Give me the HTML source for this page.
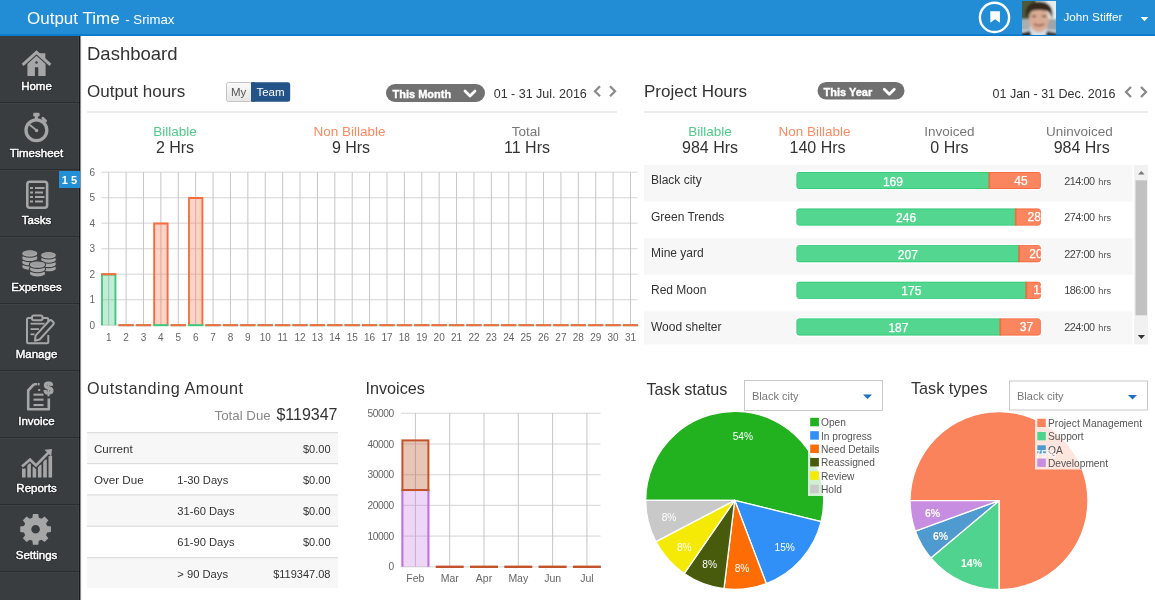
<!DOCTYPE html>
<html><head><meta charset="utf-8"><title>Output Time - Dashboard</title>
<style>
html,body{margin:0;padding:0;background:#fff;overflow:hidden;}
body{width:1155px;height:600px;position:relative;font-family:"Liberation Sans", sans-serif;}
svg{position:absolute;left:0;top:0;display:block;will-change:transform;}
svg text{font-family:"Liberation Sans", sans-serif;}
</style></head><body>
<svg width="1155" height="600" viewBox="0 0 1155 600">
<defs><linearGradient id="gMy" x1="0" y1="0" x2="0" y2="1"><stop offset="0" stop-color="#fafafa"/><stop offset="1" stop-color="#e6e6e6"/></linearGradient></defs>
<rect x="0" y="0" width="1155" height="36" fill="#228dd4" />
<rect x="0" y="34.2" width="1155" height="1.8" fill="#0b7acb" />
<text x="27" y="24" font-size="17" fill="#fff" text-anchor="start" font-weight="400" >Output Time</text>
<text x="125.3" y="23.5" font-size="13.2" fill="#fff" text-anchor="start" font-weight="400" >- Srimax</text>
<circle cx="994.5" cy="17.4" r="14.6" fill="none" stroke="#fff" stroke-width="2.4"/>
<path d="M990.3 11.3 H999.9 V22.7 L995.1 19.2 L990.3 22.7 Z" fill="#fff" stroke="none" stroke-width="1" />
<clipPath id="avc"><rect x="1022" y="1" width="34" height="34"/></clipPath>
<filter id="avb" x="-10%" y="-10%" width="120%" height="120%"><feGaussianBlur stdDeviation="0.9"/></filter>
<g clip-path="url(#avc)"><g filter="url(#avb)">
<rect x="1020" y="-1" width="38" height="38" fill="#cfd3d2"/>
<rect x="1020" y="-1" width="16" height="20" fill="#4d5a3e"/>
<rect x="1046" y="-1" width="12" height="22" fill="#e9eceb"/>
<rect x="1020" y="19" width="10" height="14" fill="#a9aeb0"/>
<rect x="1047" y="19" width="11" height="14" fill="#9ea5aa"/>
<path d="M1020 37 V31 Q1028 29 1034 30 L1044 30 Q1050 29 1058 31 V37 Z" fill="#d8dde4"/>
<path d="M1020 37 V33 L1030 31 L1032 37 Z" fill="#2a2a2a"/>
<path d="M1045 37 L1047 31 L1058 33 V37 Z" fill="#3a3a3a"/>
<ellipse cx="1039" cy="19.5" rx="10" ry="12.5" fill="#d9aa93"/>
<path d="M1026 19 Q1023 2 1039 1.5 Q1055 2 1052 19 Q1050 12 1047 11 Q1039 9 1031 11 Q1028 12 1026 19 Z" fill="#35291f"/>
<rect x="1032" y="15.5" width="4" height="1.6" fill="#5a3c2c"/>
<rect x="1042" y="15.5" width="4" height="1.6" fill="#5a3c2c"/>
<path d="M1034 24 Q1039 27 1044 24" stroke="#8f5a4c" stroke-width="1.6" fill="none"/>
</g></g>
<text x="1063.5" y="21.3" font-size="11.7" fill="#fff" text-anchor="start" font-weight="400" >John Stiffer</text>
<path d="M1140.7 16.9 H1148.3 L1144.5 21.3 Z" fill="#fff" stroke="none" stroke-width="1" />
<rect x="0" y="36" width="80" height="564" fill="#3a3d40" />
<rect x="78" y="36" width="1" height="564" fill="#44474a" />
<rect x="79" y="36" width="1" height="564" fill="#15171a" />
<rect x="80" y="36" width="1" height="564" fill="#8e8f90" />
<rect x="81" y="36" width="1" height="564" fill="#f1f1f1" />
<rect x="0" y="102" width="79" height="1.3" fill="#2a2c2e" />
<rect x="0" y="103" width="79" height="1" fill="#404346" />
<text x="36.5" y="89.5" font-size="11.5" fill="#111" text-anchor="middle" font-weight="400" stroke="#151618" stroke-width="2.2" opacity="0.55">Home</text>
<text x="36.5" y="89.5" font-size="11.5" fill="#fff" text-anchor="middle" font-weight="400" stroke="#fff" stroke-width="0.45">Home</text>
<rect x="0" y="169" width="79" height="1.3" fill="#2a2c2e" />
<rect x="0" y="170" width="79" height="1" fill="#404346" />
<text x="36.5" y="156.5" font-size="11.5" fill="#111" text-anchor="middle" font-weight="400" stroke="#151618" stroke-width="2.2" opacity="0.55">Timesheet</text>
<text x="36.5" y="156.5" font-size="11.5" fill="#fff" text-anchor="middle" font-weight="400" stroke="#fff" stroke-width="0.45">Timesheet</text>
<rect x="0" y="236" width="79" height="1.3" fill="#2a2c2e" />
<rect x="0" y="237" width="79" height="1" fill="#404346" />
<text x="36.5" y="223.5" font-size="11.5" fill="#111" text-anchor="middle" font-weight="400" stroke="#151618" stroke-width="2.2" opacity="0.55">Tasks</text>
<text x="36.5" y="223.5" font-size="11.5" fill="#fff" text-anchor="middle" font-weight="400" stroke="#fff" stroke-width="0.45">Tasks</text>
<rect x="0" y="303" width="79" height="1.3" fill="#2a2c2e" />
<rect x="0" y="304" width="79" height="1" fill="#404346" />
<text x="36.5" y="290.5" font-size="11.5" fill="#111" text-anchor="middle" font-weight="400" stroke="#151618" stroke-width="2.2" opacity="0.55">Expenses</text>
<text x="36.5" y="290.5" font-size="11.5" fill="#fff" text-anchor="middle" font-weight="400" stroke="#fff" stroke-width="0.45">Expenses</text>
<rect x="0" y="370" width="79" height="1.3" fill="#2a2c2e" />
<rect x="0" y="371" width="79" height="1" fill="#404346" />
<text x="36.5" y="357.5" font-size="11.5" fill="#111" text-anchor="middle" font-weight="400" stroke="#151618" stroke-width="2.2" opacity="0.55">Manage</text>
<text x="36.5" y="357.5" font-size="11.5" fill="#fff" text-anchor="middle" font-weight="400" stroke="#fff" stroke-width="0.45">Manage</text>
<rect x="0" y="437" width="79" height="1.3" fill="#2a2c2e" />
<rect x="0" y="438" width="79" height="1" fill="#404346" />
<text x="36.5" y="424.5" font-size="11.5" fill="#111" text-anchor="middle" font-weight="400" stroke="#151618" stroke-width="2.2" opacity="0.55">Invoice</text>
<text x="36.5" y="424.5" font-size="11.5" fill="#fff" text-anchor="middle" font-weight="400" stroke="#fff" stroke-width="0.45">Invoice</text>
<rect x="0" y="504" width="79" height="1.3" fill="#2a2c2e" />
<rect x="0" y="505" width="79" height="1" fill="#404346" />
<text x="36.5" y="491.5" font-size="11.5" fill="#111" text-anchor="middle" font-weight="400" stroke="#151618" stroke-width="2.2" opacity="0.55">Reports</text>
<text x="36.5" y="491.5" font-size="11.5" fill="#fff" text-anchor="middle" font-weight="400" stroke="#fff" stroke-width="0.45">Reports</text>
<rect x="0" y="571" width="79" height="1.3" fill="#2a2c2e" />
<rect x="0" y="572" width="79" height="1" fill="#404346" />
<text x="36.5" y="558.5" font-size="11.5" fill="#111" text-anchor="middle" font-weight="400" stroke="#151618" stroke-width="2.2" opacity="0.55">Settings</text>
<text x="36.5" y="558.5" font-size="11.5" fill="#fff" text-anchor="middle" font-weight="400" stroke="#fff" stroke-width="0.45">Settings</text>
<path d="M27.4 63.5 L36.5 55 L45.6 63.5 V76.1 H38.3 V67.3 H34.9 V76.1 H27.4 Z" fill="#a6a6a6" stroke="none" stroke-width="1" />
<path d="M23.1 64.3 L36.5 52.3 L49.8 64.3" fill="none" stroke="#3a3d40" stroke-width="5" />
<path d="M38.8 53.2 H45.3 V60.3 L38.8 54.5 Z" fill="#a6a6a6" stroke="none" stroke-width="1" />
<path d="M22.6 64.8 L36.5 52.3 L50.4 64.8" fill="none" stroke="#a6a6a6" stroke-width="2.9" />
<circle cx="36.5" cy="62.5" r="1.2" fill="#3a3d40"/>
<circle cx="36.4" cy="130.2" r="10.4" fill="none" stroke="#a6a6a6" stroke-width="3.3"/>
<rect x="33.2" y="112.8" width="6.4" height="3.6" fill="#a6a6a6" rx="1.2"/>
<rect x="34.9" y="115" width="3" height="4" fill="#a6a6a6" />
<path d="M42.8 118.3 L45.6 121.1" fill="none" stroke="#a6a6a6" stroke-width="2.8" stroke-linecap="round"/>
<path d="M30.2 125.2 L36.6 130.4" fill="none" stroke="#a6a6a6" stroke-width="1.8" stroke-linecap="round"/>
<circle cx="36.6" cy="130.5" r="1.7" fill="#a6a6a6"/>
<rect x="27.3" y="181.8" width="19.8" height="26" fill="none" stroke="#a6a6a6" stroke-width="2.6" rx="2.5"/>
<rect x="30" y="187" width="3" height="2" fill="#a6a6a6" />
<rect x="35" y="187" width="9.5" height="2" fill="#a6a6a6" />
<rect x="30" y="191.5" width="3" height="2" fill="#a6a6a6" />
<rect x="35" y="191.5" width="8" height="2" fill="#a6a6a6" />
<rect x="30" y="196" width="3" height="2" fill="#a6a6a6" />
<rect x="35" y="196" width="9.5" height="2" fill="#a6a6a6" />
<rect x="30" y="200.5" width="3" height="2" fill="#a6a6a6" />
<rect x="35" y="200.5" width="8" height="2" fill="#a6a6a6" />
<path d="M21.8 265.9 A8 3.2 0 0 1 37.8 265.9 V267.0 A8 3.2 0 0 1 21.8 267.0 Z" fill="#a6a6a6" stroke="#3a3d40" stroke-width="1.1"/>
<path d="M21.8 261.6 A8 3.2 0 0 1 37.8 261.6 V262.70000000000005 A8 3.2 0 0 1 21.8 262.70000000000005 Z" fill="#a6a6a6" stroke="#3a3d40" stroke-width="1.1"/>
<path d="M21.8 257.3 A8 3.2 0 0 1 37.8 257.3 V258.40000000000003 A8 3.2 0 0 1 21.8 258.40000000000003 Z" fill="#a6a6a6" stroke="#3a3d40" stroke-width="1.1"/>
<path d="M21.8 253.0 A8 3.2 0 0 1 37.8 253.0 V254.1 A8 3.2 0 0 1 21.8 254.1 Z" fill="#a6a6a6" stroke="#3a3d40" stroke-width="1.1"/>
<ellipse cx="29.8" cy="253" rx="6.7" ry="2" fill="#9c9c9c"/>
<path d="M40.7 267.59999999999997 A7.8 3.2 0 0 1 56.3 267.59999999999997 V268.7 A7.8 3.2 0 0 1 40.7 268.7 Z" fill="#a6a6a6" stroke="#3a3d40" stroke-width="1.1"/>
<path d="M40.7 263.3 A7.8 3.2 0 0 1 56.3 263.3 V264.40000000000003 A7.8 3.2 0 0 1 40.7 264.40000000000003 Z" fill="#a6a6a6" stroke="#3a3d40" stroke-width="1.1"/>
<path d="M40.7 259.0 A7.8 3.2 0 0 1 56.3 259.0 V260.1 A7.8 3.2 0 0 1 40.7 260.1 Z" fill="#a6a6a6" stroke="#3a3d40" stroke-width="1.1"/>
<path d="M40.7 254.7 A7.8 3.2 0 0 1 56.3 254.7 V255.79999999999998 A7.8 3.2 0 0 1 40.7 255.79999999999998 Z" fill="#a6a6a6" stroke="#3a3d40" stroke-width="1.1"/>
<ellipse cx="48.5" cy="254.7" rx="6.5" ry="2" fill="#9c9c9c"/>
<path d="M29.5 272.70000000000005 A8 3.2 0 0 1 45.5 272.70000000000005 V273.80000000000007 A8 3.2 0 0 1 29.5 273.80000000000007 Z" fill="#a6a6a6" stroke="#3a3d40" stroke-width="1.1"/>
<path d="M29.5 268.40000000000003 A8 3.2 0 0 1 45.5 268.40000000000003 V269.50000000000006 A8 3.2 0 0 1 29.5 269.50000000000006 Z" fill="#a6a6a6" stroke="#3a3d40" stroke-width="1.1"/>
<path d="M29.5 264.1 A8 3.2 0 0 1 45.5 264.1 V265.20000000000005 A8 3.2 0 0 1 29.5 265.20000000000005 Z" fill="#a6a6a6" stroke="#3a3d40" stroke-width="1.1"/>
<ellipse cx="37.5" cy="264.1" rx="6.7" ry="2" fill="#9c9c9c"/>
<path d="M41 318 H46.8 Q48.3 318 48.3 319.5 V325.5" fill="none" stroke="#a6a6a6" stroke-width="2" />
<path d="M31.5 318 H28.5 Q27 318 27 319.5 V341.8 Q27 343.3 28.5 343.3 H46.8 Q48.3 343.3 48.3 341.8 V335" fill="none" stroke="#a6a6a6" stroke-width="2" />
<rect x="32" y="315.5" width="10.5" height="4.8" fill="#3a3d40" stroke="#a6a6a6" stroke-width="2" rx="1.8"/>
<rect x="30.5" y="322.8" width="14" height="1.8" fill="#a6a6a6" />
<rect x="30.5" y="328.2" width="8.5" height="1.8" fill="#a6a6a6" />
<rect x="30.5" y="333.4" width="4" height="1.8" fill="#a6a6a6" />
<path d="M35 340.8 L35.6 335.6 L49.2 320.8 Q50.6 319.5 52 320.8 L53.2 322 Q54.4 323.4 53 324.8 L39.6 339.5 Z" fill="#3a3d40" stroke="#a6a6a6" stroke-width="2" stroke-linejoin="round"/>
<path d="M34 384.2 L28.2 390.5 V409.3 H48.8 V398.5" fill="none" stroke="#a6a6a6" stroke-width="2.6" stroke-linejoin="round"/>
<path d="M34 384.2 H37.2" fill="none" stroke="#a6a6a6" stroke-width="2.4" />
<rect x="37.8" y="383" width="1.8" height="2.4" fill="#a6a6a6" />
<rect x="38.2" y="389" width="2" height="2" fill="#a6a6a6" />
<rect x="33.5" y="393.6" width="10" height="2.1" fill="#a6a6a6" />
<rect x="33.5" y="398.6" width="10" height="2.1" fill="#a6a6a6" />
<rect x="33.5" y="404" width="10" height="2.1" fill="#a6a6a6" />
<text x="48.6" y="393.6" font-size="17" fill="#a6a6a6" text-anchor="middle" font-weight="700" stroke="#a6a6a6" stroke-width="1.1">$</text>
<rect x="22" y="468.5" width="3.6" height="9.0" fill="#a6a6a6" />
<rect x="27.3" y="463" width="3.6" height="14.5" fill="#a6a6a6" />
<rect x="32.6" y="466.5" width="3.6" height="11.0" fill="#a6a6a6" />
<rect x="37.9" y="464.5" width="3.6" height="13.0" fill="#a6a6a6" />
<rect x="43.2" y="459.5" width="3.6" height="18.0" fill="#a6a6a6" />
<rect x="48.5" y="456" width="3.6" height="21.5" fill="#a6a6a6" />
<path d="M22 466.5 L30 459.5 L36 465.5 L48.5 452.5" fill="none" stroke="#3a3d40" stroke-width="5.2" stroke-linejoin="miter"/>
<path d="M22 466.5 L30 459.5 L36 465.5 L48.5 452.5" fill="none" stroke="#a6a6a6" stroke-width="2.6" stroke-linejoin="miter"/>
<path d="M44.5 449.8 L52 449 L51.2 456.5 Z" fill="#a6a6a6" stroke="none" stroke-width="1" />
<path d="M32.40 517.73 L32.92 513.93 L38.28 513.93 L38.80 517.73 L41.51 518.86 L44.57 516.54 L48.36 520.33 L46.04 523.39 L47.17 526.10 L50.97 526.62 L50.97 531.98 L47.17 532.50 L46.04 535.21 L48.36 538.27 L44.57 542.06 L41.51 539.74 L38.80 540.87 L38.28 544.67 L32.92 544.67 L32.40 540.87 L29.69 539.74 L26.63 542.06 L22.84 538.27 L25.16 535.21 L24.03 532.50 L20.23 531.98 L20.23 526.62 L24.03 526.10 L25.16 523.39 L22.84 520.33 L26.63 516.54 L29.69 518.86 Z M39.9 529.3 A4.3 4.3 0 1 0 31.3 529.3 A4.3 4.3 0 1 0 39.9 529.3 Z" fill="#a6a6a6" stroke="none" stroke-width="1" fill-rule="evenodd"/>
<rect x="59" y="171" width="21" height="17" fill="#238fd6" />
<text x="69.5" y="184" font-size="11" fill="#fff" text-anchor="middle" font-weight="700" >1 5</text>
<text x="87" y="60" font-size="18.5" fill="#333" text-anchor="start" font-weight="400" >Dashboard</text>
<text x="87" y="96.7" font-size="17" fill="#333" text-anchor="start" font-weight="400" >Output hours</text>
<rect x="226.5" y="82.5" width="25" height="19" fill="url(#gMy)" stroke="#c4c4c4" stroke-width="1" rx="2"/>
<rect x="251" y="82.2" width="39.2" height="19.5" fill="#235387" rx="2.5"/>
<rect x="251" y="82.2" width="4" height="19.5" fill="#235387" />
<text x="238.7" y="96.3" font-size="11.5" fill="#555" text-anchor="middle" font-weight="400" >My</text>
<text x="270.5" y="96.3" font-size="11.5" fill="#fff" text-anchor="middle" font-weight="400" >Team</text>
<rect x="386" y="84" width="99" height="18" fill="#717171" rx="9"/>
<text x="392.5" y="97.5" font-size="11" fill="#fff" text-anchor="start" font-weight="700" stroke="#fff" stroke-width="0.35">This Month</text>
<path d="M465 91 L470 96 L475 91" fill="none" stroke="#fff" stroke-width="2.8" stroke-linecap="round" stroke-linejoin="round"/>
<text x="493.7" y="97.5" font-size="12.5" fill="#333" text-anchor="start" font-weight="400" >01 - 31 Jul. 2016</text>
<path d="M600 86.2 L595 91.2 L600 96.2" fill="none" stroke="#8a8a8a" stroke-width="2.3" />
<path d="M610 86.2 L615 91.2 L610 96.2" fill="none" stroke="#8a8a8a" stroke-width="2.3" />
<rect x="87" y="111.5" width="530" height="1" fill="#dcdcdc" />
<text x="175" y="136" font-size="13.5" fill="#4fca8a" text-anchor="middle" font-weight="400" >Billable</text>
<text x="175" y="153" font-size="16" fill="#333" text-anchor="middle" font-weight="400" >2 Hrs</text>
<text x="349.5" y="136" font-size="13.5" fill="#f98a62" text-anchor="middle" font-weight="400" >Non Billable</text>
<text x="351" y="153" font-size="16" fill="#333" text-anchor="middle" font-weight="400" >9 Hrs</text>
<text x="526" y="136" font-size="13.5" fill="#777" text-anchor="middle" font-weight="400" >Total</text>
<text x="527" y="153" font-size="16" fill="#333" text-anchor="middle" font-weight="400" >11 Hrs</text>
<rect x="101.3" y="324.59999999999997" width="536.2" height="1.2" fill="#dcdcdc" />
<text x="95" y="328.8" font-size="10" fill="#666" text-anchor="end" font-weight="400" >0</text>
<rect x="101.3" y="299.09999999999997" width="536.2" height="1.2" fill="#dcdcdc" />
<text x="95" y="303.3" font-size="10" fill="#666" text-anchor="end" font-weight="400" >1</text>
<rect x="101.3" y="273.59999999999997" width="536.2" height="1.2" fill="#dcdcdc" />
<text x="95" y="277.8" font-size="10" fill="#666" text-anchor="end" font-weight="400" >2</text>
<rect x="101.3" y="248.1" width="536.2" height="1.2" fill="#dcdcdc" />
<text x="95" y="252.29999999999998" font-size="10" fill="#666" text-anchor="end" font-weight="400" >3</text>
<rect x="101.3" y="222.6" width="536.2" height="1.2" fill="#dcdcdc" />
<text x="95" y="226.79999999999998" font-size="10" fill="#666" text-anchor="end" font-weight="400" >4</text>
<rect x="101.3" y="197.1" width="536.2" height="1.2" fill="#dcdcdc" />
<text x="95" y="201.29999999999998" font-size="10" fill="#666" text-anchor="end" font-weight="400" >5</text>
<rect x="101.3" y="171.6" width="536.2" height="1.2" fill="#dcdcdc" />
<text x="95" y="175.79999999999998" font-size="10" fill="#666" text-anchor="end" font-weight="400" >6</text>
<rect x="108.2" y="172.2" width="1" height="153.0" fill="#c6c6c6" />
<text x="108.7" y="340.5" font-size="10" fill="#666" text-anchor="middle" font-weight="400" >1</text>
<rect x="125.593" y="172.2" width="1" height="153.0" fill="#c6c6c6" />
<text x="126.093" y="340.5" font-size="10" fill="#666" text-anchor="middle" font-weight="400" >2</text>
<rect x="142.986" y="172.2" width="1" height="153.0" fill="#c6c6c6" />
<text x="143.486" y="340.5" font-size="10" fill="#666" text-anchor="middle" font-weight="400" >3</text>
<rect x="160.37900000000002" y="172.2" width="1" height="153.0" fill="#c6c6c6" />
<text x="160.87900000000002" y="340.5" font-size="10" fill="#666" text-anchor="middle" font-weight="400" >4</text>
<rect x="177.772" y="172.2" width="1" height="153.0" fill="#c6c6c6" />
<text x="178.272" y="340.5" font-size="10" fill="#666" text-anchor="middle" font-weight="400" >5</text>
<rect x="195.16500000000002" y="172.2" width="1" height="153.0" fill="#c6c6c6" />
<text x="195.66500000000002" y="340.5" font-size="10" fill="#666" text-anchor="middle" font-weight="400" >6</text>
<rect x="212.558" y="172.2" width="1" height="153.0" fill="#c6c6c6" />
<text x="213.058" y="340.5" font-size="10" fill="#666" text-anchor="middle" font-weight="400" >7</text>
<rect x="229.95100000000002" y="172.2" width="1" height="153.0" fill="#c6c6c6" />
<text x="230.45100000000002" y="340.5" font-size="10" fill="#666" text-anchor="middle" font-weight="400" >8</text>
<rect x="247.344" y="172.2" width="1" height="153.0" fill="#c6c6c6" />
<text x="247.844" y="340.5" font-size="10" fill="#666" text-anchor="middle" font-weight="400" >9</text>
<rect x="264.737" y="172.2" width="1" height="153.0" fill="#c6c6c6" />
<text x="265.237" y="340.5" font-size="10" fill="#666" text-anchor="middle" font-weight="400" >10</text>
<rect x="282.13" y="172.2" width="1" height="153.0" fill="#c6c6c6" />
<text x="282.63" y="340.5" font-size="10" fill="#666" text-anchor="middle" font-weight="400" >11</text>
<rect x="299.523" y="172.2" width="1" height="153.0" fill="#c6c6c6" />
<text x="300.023" y="340.5" font-size="10" fill="#666" text-anchor="middle" font-weight="400" >12</text>
<rect x="316.916" y="172.2" width="1" height="153.0" fill="#c6c6c6" />
<text x="317.416" y="340.5" font-size="10" fill="#666" text-anchor="middle" font-weight="400" >13</text>
<rect x="334.309" y="172.2" width="1" height="153.0" fill="#c6c6c6" />
<text x="334.809" y="340.5" font-size="10" fill="#666" text-anchor="middle" font-weight="400" >14</text>
<rect x="351.702" y="172.2" width="1" height="153.0" fill="#c6c6c6" />
<text x="352.202" y="340.5" font-size="10" fill="#666" text-anchor="middle" font-weight="400" >15</text>
<rect x="369.09499999999997" y="172.2" width="1" height="153.0" fill="#c6c6c6" />
<text x="369.59499999999997" y="340.5" font-size="10" fill="#666" text-anchor="middle" font-weight="400" >16</text>
<rect x="386.488" y="172.2" width="1" height="153.0" fill="#c6c6c6" />
<text x="386.988" y="340.5" font-size="10" fill="#666" text-anchor="middle" font-weight="400" >17</text>
<rect x="403.88100000000003" y="172.2" width="1" height="153.0" fill="#c6c6c6" />
<text x="404.38100000000003" y="340.5" font-size="10" fill="#666" text-anchor="middle" font-weight="400" >18</text>
<rect x="421.274" y="172.2" width="1" height="153.0" fill="#c6c6c6" />
<text x="421.774" y="340.5" font-size="10" fill="#666" text-anchor="middle" font-weight="400" >19</text>
<rect x="438.667" y="172.2" width="1" height="153.0" fill="#c6c6c6" />
<text x="439.167" y="340.5" font-size="10" fill="#666" text-anchor="middle" font-weight="400" >20</text>
<rect x="456.06" y="172.2" width="1" height="153.0" fill="#c6c6c6" />
<text x="456.56" y="340.5" font-size="10" fill="#666" text-anchor="middle" font-weight="400" >21</text>
<rect x="473.45300000000003" y="172.2" width="1" height="153.0" fill="#c6c6c6" />
<text x="473.95300000000003" y="340.5" font-size="10" fill="#666" text-anchor="middle" font-weight="400" >22</text>
<rect x="490.846" y="172.2" width="1" height="153.0" fill="#c6c6c6" />
<text x="491.346" y="340.5" font-size="10" fill="#666" text-anchor="middle" font-weight="400" >23</text>
<rect x="508.239" y="172.2" width="1" height="153.0" fill="#c6c6c6" />
<text x="508.739" y="340.5" font-size="10" fill="#666" text-anchor="middle" font-weight="400" >24</text>
<rect x="525.6320000000001" y="172.2" width="1" height="153.0" fill="#c6c6c6" />
<text x="526.1320000000001" y="340.5" font-size="10" fill="#666" text-anchor="middle" font-weight="400" >25</text>
<rect x="543.0250000000001" y="172.2" width="1" height="153.0" fill="#c6c6c6" />
<text x="543.5250000000001" y="340.5" font-size="10" fill="#666" text-anchor="middle" font-weight="400" >26</text>
<rect x="560.418" y="172.2" width="1" height="153.0" fill="#c6c6c6" />
<text x="560.918" y="340.5" font-size="10" fill="#666" text-anchor="middle" font-weight="400" >27</text>
<rect x="577.811" y="172.2" width="1" height="153.0" fill="#c6c6c6" />
<text x="578.311" y="340.5" font-size="10" fill="#666" text-anchor="middle" font-weight="400" >28</text>
<rect x="595.2040000000001" y="172.2" width="1" height="153.0" fill="#c6c6c6" />
<text x="595.7040000000001" y="340.5" font-size="10" fill="#666" text-anchor="middle" font-weight="400" >29</text>
<rect x="612.5970000000001" y="172.2" width="1" height="153.0" fill="#c6c6c6" />
<text x="613.0970000000001" y="340.5" font-size="10" fill="#666" text-anchor="middle" font-weight="400" >30</text>
<rect x="629.99" y="172.2" width="1" height="153.0" fill="#c6c6c6" />
<text x="630.49" y="340.5" font-size="10" fill="#666" text-anchor="middle" font-weight="400" >31</text>
<rect x="101.10000000000001" y="274.2" width="15.2" height="51.0" fill="rgba(76,202,138,0.35)" />
<path d="M102.00 325.2 V274.5 H115.40 V325.2" fill="none" stroke="#3ec77a" stroke-width="1.8" />
<rect x="153.27900000000002" y="223.2" width="15.2" height="102.0" fill="rgba(249,120,80,0.33)" />
<path d="M154.18 325.2 V223.5 H167.58 V325.2" fill="none" stroke="#f76c3f" stroke-width="1.8" />
<rect x="188.06500000000003" y="197.7" width="15.2" height="127.5" fill="rgba(249,120,80,0.33)" />
<path d="M188.97 325.2 V198.0 H202.37 V325.2" fill="none" stroke="#f76c3f" stroke-width="1.8" />
<rect x="101.10000000000001" y="273.2" width="15.2" height="2" fill="#f76c3f" />
<rect x="118.49300000000001" y="324.2" width="15.2" height="2" fill="#3ec77a" />
<rect x="118.49300000000001" y="324.2" width="15.2" height="2" fill="#f76c3f" />
<rect x="135.886" y="324.2" width="15.2" height="2" fill="#3ec77a" />
<rect x="135.886" y="324.2" width="15.2" height="2" fill="#f76c3f" />
<rect x="153.27900000000002" y="324.2" width="15.2" height="2" fill="#3ec77a" />
<rect x="170.672" y="324.2" width="15.2" height="2" fill="#3ec77a" />
<rect x="170.672" y="324.2" width="15.2" height="2" fill="#f76c3f" />
<rect x="188.06500000000003" y="324.2" width="15.2" height="2" fill="#3ec77a" />
<rect x="205.458" y="324.2" width="15.2" height="2" fill="#3ec77a" />
<rect x="205.458" y="324.2" width="15.2" height="2" fill="#f76c3f" />
<rect x="222.85100000000003" y="324.2" width="15.2" height="2" fill="#3ec77a" />
<rect x="222.85100000000003" y="324.2" width="15.2" height="2" fill="#f76c3f" />
<rect x="240.244" y="324.2" width="15.2" height="2" fill="#3ec77a" />
<rect x="240.244" y="324.2" width="15.2" height="2" fill="#f76c3f" />
<rect x="257.637" y="324.2" width="15.2" height="2" fill="#3ec77a" />
<rect x="257.637" y="324.2" width="15.2" height="2" fill="#f76c3f" />
<rect x="275.03" y="324.2" width="15.2" height="2" fill="#3ec77a" />
<rect x="275.03" y="324.2" width="15.2" height="2" fill="#f76c3f" />
<rect x="292.423" y="324.2" width="15.2" height="2" fill="#3ec77a" />
<rect x="292.423" y="324.2" width="15.2" height="2" fill="#f76c3f" />
<rect x="309.816" y="324.2" width="15.2" height="2" fill="#3ec77a" />
<rect x="309.816" y="324.2" width="15.2" height="2" fill="#f76c3f" />
<rect x="327.209" y="324.2" width="15.2" height="2" fill="#3ec77a" />
<rect x="327.209" y="324.2" width="15.2" height="2" fill="#f76c3f" />
<rect x="344.602" y="324.2" width="15.2" height="2" fill="#3ec77a" />
<rect x="344.602" y="324.2" width="15.2" height="2" fill="#f76c3f" />
<rect x="361.99499999999995" y="324.2" width="15.2" height="2" fill="#3ec77a" />
<rect x="361.99499999999995" y="324.2" width="15.2" height="2" fill="#f76c3f" />
<rect x="379.388" y="324.2" width="15.2" height="2" fill="#3ec77a" />
<rect x="379.388" y="324.2" width="15.2" height="2" fill="#f76c3f" />
<rect x="396.781" y="324.2" width="15.2" height="2" fill="#3ec77a" />
<rect x="396.781" y="324.2" width="15.2" height="2" fill="#f76c3f" />
<rect x="414.174" y="324.2" width="15.2" height="2" fill="#3ec77a" />
<rect x="414.174" y="324.2" width="15.2" height="2" fill="#f76c3f" />
<rect x="431.56699999999995" y="324.2" width="15.2" height="2" fill="#3ec77a" />
<rect x="431.56699999999995" y="324.2" width="15.2" height="2" fill="#f76c3f" />
<rect x="448.96" y="324.2" width="15.2" height="2" fill="#3ec77a" />
<rect x="448.96" y="324.2" width="15.2" height="2" fill="#f76c3f" />
<rect x="466.353" y="324.2" width="15.2" height="2" fill="#3ec77a" />
<rect x="466.353" y="324.2" width="15.2" height="2" fill="#f76c3f" />
<rect x="483.746" y="324.2" width="15.2" height="2" fill="#3ec77a" />
<rect x="483.746" y="324.2" width="15.2" height="2" fill="#f76c3f" />
<rect x="501.13899999999995" y="324.2" width="15.2" height="2" fill="#3ec77a" />
<rect x="501.13899999999995" y="324.2" width="15.2" height="2" fill="#f76c3f" />
<rect x="518.532" y="324.2" width="15.2" height="2" fill="#3ec77a" />
<rect x="518.532" y="324.2" width="15.2" height="2" fill="#f76c3f" />
<rect x="535.9250000000001" y="324.2" width="15.2" height="2" fill="#3ec77a" />
<rect x="535.9250000000001" y="324.2" width="15.2" height="2" fill="#f76c3f" />
<rect x="553.318" y="324.2" width="15.2" height="2" fill="#3ec77a" />
<rect x="553.318" y="324.2" width="15.2" height="2" fill="#f76c3f" />
<rect x="570.711" y="324.2" width="15.2" height="2" fill="#3ec77a" />
<rect x="570.711" y="324.2" width="15.2" height="2" fill="#f76c3f" />
<rect x="588.104" y="324.2" width="15.2" height="2" fill="#3ec77a" />
<rect x="588.104" y="324.2" width="15.2" height="2" fill="#f76c3f" />
<rect x="605.4970000000001" y="324.2" width="15.2" height="2" fill="#3ec77a" />
<rect x="605.4970000000001" y="324.2" width="15.2" height="2" fill="#f76c3f" />
<rect x="622.89" y="324.2" width="15.2" height="2" fill="#3ec77a" />
<rect x="622.89" y="324.2" width="15.2" height="2" fill="#f76c3f" />
<text x="644" y="96.8" font-size="17" fill="#333" text-anchor="start" font-weight="400" >Project Hours</text>
<rect x="817.5" y="82" width="87" height="17.6" fill="#707070" rx="8.8"/>
<text x="823.5" y="95.6" font-size="11" fill="#fff" text-anchor="start" font-weight="700" stroke="#fff" stroke-width="0.35">This Year</text>
<path d="M884.3 89.2 L889.3 94.2 L894.3 89.2" fill="none" stroke="#fff" stroke-width="2.8" stroke-linecap="round" stroke-linejoin="round"/>
<text x="992.5" y="97.5" font-size="12.5" fill="#333" text-anchor="start" font-weight="400" >01 Jan - 31 Dec. 2016</text>
<path d="M1131 87 L1126 92 L1131 97" fill="none" stroke="#8a8a8a" stroke-width="2.3" />
<path d="M1141 87 L1146 92 L1141 97" fill="none" stroke="#8a8a8a" stroke-width="2.3" />
<rect x="644" y="111.5" width="504" height="1" fill="#dcdcdc" />
<text x="710" y="136" font-size="13.5" fill="#4fca8a" text-anchor="middle" font-weight="400" >Billable</text>
<text x="710" y="153" font-size="16" fill="#333" text-anchor="middle" font-weight="400" >984 Hrs</text>
<text x="814.5" y="136" font-size="13.5" fill="#f98a62" text-anchor="middle" font-weight="400" >Non Billable</text>
<text x="817.5" y="153" font-size="16" fill="#333" text-anchor="middle" font-weight="400" >140 Hrs</text>
<text x="949.4" y="136" font-size="13.5" fill="#777" text-anchor="middle" font-weight="400" >Invoiced</text>
<text x="949.4" y="153" font-size="16" fill="#333" text-anchor="middle" font-weight="400" >0 Hrs</text>
<text x="1079.4" y="136" font-size="13.5" fill="#777" text-anchor="middle" font-weight="400" >Uninvoiced</text>
<text x="1081.7" y="153" font-size="16" fill="#333" text-anchor="middle" font-weight="400" >984 Hrs</text>
<clipPath id="plist"><rect x="644" y="165" width="504" height="179.5"/></clipPath><g clip-path="url(#plist)">
<rect x="644" y="165.0" width="488.5" height="36.6" fill="#f7f7f7" />
<text x="651" y="184.2" font-size="12" fill="#333" text-anchor="start" font-weight="400" >Black city</text>
<clipPath id="pb0"><rect x="796.5" y="172.0" width="244.20000000000005" height="17" rx="3"/></clipPath>
<rect x="795.5" y="170.5" width="246.20000000000005" height="20" fill="#fff" rx="4"/>
<g clip-path="url(#pb0)">
<rect x="796.5" y="172.0" width="192.8495327102804" height="17" fill="#52d690" stroke="#36c978" stroke-width="1.6"/>
<rect x="989.3495327102804" y="172.0" width="51.35046728971963" height="17" fill="#fa855e" stroke="#f66b3c" stroke-width="1.6"/>
<text x="892.9247663551403" y="185.5" font-size="12" fill="#fff" text-anchor="middle" font-weight="400" stroke="#fff" stroke-width="0.25">169</text>
<text x="1021.0247663551402" y="184.5" font-size="12" fill="#fff" text-anchor="middle" font-weight="400" stroke="#fff" stroke-width="0.25">45</text>
</g>
<text x="1064.2" y="184.5" font-size="10.8" fill="#444" text-anchor="start" font-weight="400" letter-spacing="-0.45">214:00</text>
<text x="1098.3" y="184.5" font-size="9.2" fill="#555" text-anchor="start" font-weight="400" >hrs</text>
<text x="651" y="220.79999999999998" font-size="12" fill="#333" text-anchor="start" font-weight="400" >Green Trends</text>
<clipPath id="pb1"><rect x="796.5" y="208.6" width="244.20000000000005" height="17" rx="3"/></clipPath>
<rect x="795.5" y="207.1" width="246.20000000000005" height="20" fill="#fff" rx="4"/>
<g clip-path="url(#pb1)">
<rect x="796.5" y="208.6" width="219.24525547445262" height="17" fill="#52d690" stroke="#36c978" stroke-width="1.6"/>
<rect x="1015.7452554744526" y="208.6" width="24.954744525547426" height="17" fill="#fa855e" stroke="#f66b3c" stroke-width="1.6"/>
<text x="906.1226277372264" y="222.1" font-size="12" fill="#fff" text-anchor="middle" font-weight="400" stroke="#fff" stroke-width="0.25">246</text>
<text x="1034.2226277372263" y="221.1" font-size="12" fill="#fff" text-anchor="middle" font-weight="400" stroke="#fff" stroke-width="0.25">28</text>
</g>
<text x="1064.2" y="221.1" font-size="10.8" fill="#444" text-anchor="start" font-weight="400" letter-spacing="-0.45">274:00</text>
<text x="1098.3" y="221.1" font-size="9.2" fill="#555" text-anchor="start" font-weight="400" >hrs</text>
<rect x="644" y="238.2" width="488.5" height="36.6" fill="#f7f7f7" />
<text x="651" y="257.4" font-size="12" fill="#333" text-anchor="start" font-weight="400" >Mine yard</text>
<clipPath id="pb2"><rect x="796.5" y="245.2" width="244.20000000000005" height="17" rx="3"/></clipPath>
<rect x="795.5" y="243.7" width="246.20000000000005" height="20" fill="#fff" rx="4"/>
<g clip-path="url(#pb2)">
<rect x="796.5" y="245.2" width="222.68458149779735" height="17" fill="#52d690" stroke="#36c978" stroke-width="1.6"/>
<rect x="1019.1845814977974" y="245.2" width="21.515418502202692" height="17" fill="#fa855e" stroke="#f66b3c" stroke-width="1.6"/>
<text x="907.8422907488987" y="258.7" font-size="12" fill="#fff" text-anchor="middle" font-weight="400" stroke="#fff" stroke-width="0.25">207</text>
<text x="1035.9422907488988" y="257.7" font-size="12" fill="#fff" text-anchor="middle" font-weight="400" stroke="#fff" stroke-width="0.25">20</text>
</g>
<text x="1064.2" y="257.7" font-size="10.8" fill="#444" text-anchor="start" font-weight="400" letter-spacing="-0.45">227:00</text>
<text x="1098.3" y="257.7" font-size="9.2" fill="#555" text-anchor="start" font-weight="400" >hrs</text>
<text x="651" y="294.0" font-size="12" fill="#333" text-anchor="start" font-weight="400" >Red Moon</text>
<clipPath id="pb3"><rect x="796.5" y="281.8" width="244.20000000000005" height="17" rx="3"/></clipPath>
<rect x="795.5" y="280.3" width="246.20000000000005" height="20" fill="#fff" rx="4"/>
<g clip-path="url(#pb3)">
<rect x="796.5" y="281.8" width="229.75806451612902" height="17" fill="#52d690" stroke="#36c978" stroke-width="1.6"/>
<rect x="1026.258064516129" y="281.8" width="14.44193548387102" height="17" fill="#fa855e" stroke="#f66b3c" stroke-width="1.6"/>
<text x="911.3790322580645" y="295.3" font-size="12" fill="#fff" text-anchor="middle" font-weight="400" stroke="#fff" stroke-width="0.25">175</text>
<text x="1039.4790322580645" y="294.3" font-size="12" fill="#fff" text-anchor="middle" font-weight="400" stroke="#fff" stroke-width="0.25">11</text>
</g>
<text x="1064.2" y="294.3" font-size="10.8" fill="#444" text-anchor="start" font-weight="400" letter-spacing="-0.45">186:00</text>
<text x="1098.3" y="294.3" font-size="9.2" fill="#555" text-anchor="start" font-weight="400" >hrs</text>
<rect x="644" y="311.4" width="488.5" height="36.6" fill="#f7f7f7" />
<text x="651" y="330.59999999999997" font-size="12" fill="#333" text-anchor="start" font-weight="400" >Wood shelter</text>
<clipPath id="pb4"><rect x="796.5" y="318.4" width="244.20000000000005" height="17" rx="3"/></clipPath>
<rect x="795.5" y="316.9" width="246.20000000000005" height="20" fill="#fff" rx="4"/>
<g clip-path="url(#pb4)">
<rect x="796.5" y="318.4" width="203.8633928571429" height="17" fill="#52d690" stroke="#36c978" stroke-width="1.6"/>
<rect x="1000.3633928571429" y="318.4" width="40.33660714285713" height="17" fill="#fa855e" stroke="#f66b3c" stroke-width="1.6"/>
<text x="898.4316964285715" y="331.9" font-size="12" fill="#fff" text-anchor="middle" font-weight="400" stroke="#fff" stroke-width="0.25">187</text>
<text x="1026.5316964285714" y="330.9" font-size="12" fill="#fff" text-anchor="middle" font-weight="400" stroke="#fff" stroke-width="0.25">37</text>
</g>
<text x="1064.2" y="330.9" font-size="10.8" fill="#444" text-anchor="start" font-weight="400" letter-spacing="-0.45">224:00</text>
<text x="1098.3" y="330.9" font-size="9.2" fill="#555" text-anchor="start" font-weight="400" >hrs</text>
</g>
<rect x="1134" y="165" width="14" height="179.5" fill="#f1f1f1" />
<rect x="1135.5" y="180.3" width="11.5" height="135" fill="#c1c1c1" />
<path d="M1138 174.5 L1141.3 171 L1144.6 174.5 Z" fill="#777" stroke="none" stroke-width="1" />
<path d="M1137.8 335 L1141.4 339 L1145 335 Z" fill="#333" stroke="none" stroke-width="1" />
<text x="87" y="394.2" font-size="16.2" fill="#333" text-anchor="start" font-weight="400" letter-spacing="0.55">Outstanding Amount</text>
<text x="270.7" y="420" font-size="13.3" fill="#888" text-anchor="end" font-weight="400" >Total Due</text>
<text x="337.5" y="420" font-size="16" fill="#333" text-anchor="end" font-weight="400" >$119347</text>
<rect x="87" y="432.5" width="251" height="31.0" fill="#f7f7f7" />
<rect x="87" y="494.8" width="251" height="31.400000000000034" fill="#f7f7f7" />
<rect x="87" y="557.5" width="251" height="30.5" fill="#f7f7f7" />
<rect x="87" y="432.0" width="251" height="1.2" fill="#dddddd" />
<rect x="87" y="463.0" width="251" height="1.2" fill="#dddddd" />
<rect x="87" y="494.3" width="251" height="1.2" fill="#dddddd" />
<rect x="87" y="525.7" width="251" height="1.2" fill="#dddddd" />
<rect x="87" y="557.0" width="251" height="1.2" fill="#dddddd" />
<text x="94" y="452.7" font-size="11.6" fill="#333" text-anchor="start" font-weight="400" >Current</text>
<text x="330.5" y="452.7" font-size="11" fill="#333" text-anchor="end" font-weight="400" >$0.00</text>
<text x="94" y="483.7" font-size="11.6" fill="#333" text-anchor="start" font-weight="400" >Over Due</text>
<text x="177.3" y="483.7" font-size="11.2" fill="#333" text-anchor="start" font-weight="400" >1-30 Days</text>
<text x="330.5" y="483.7" font-size="11" fill="#333" text-anchor="end" font-weight="400" >$0.00</text>
<text x="177.3" y="515.0" font-size="11.2" fill="#333" text-anchor="start" font-weight="400" >31-60 Days</text>
<text x="330.5" y="515.0" font-size="11" fill="#333" text-anchor="end" font-weight="400" >$0.00</text>
<text x="177.3" y="546.4000000000001" font-size="11.2" fill="#333" text-anchor="start" font-weight="400" >61-90 Days</text>
<text x="330.5" y="546.4000000000001" font-size="11" fill="#333" text-anchor="end" font-weight="400" >$0.00</text>
<text x="177.3" y="577.7" font-size="11.2" fill="#333" text-anchor="start" font-weight="400" >&gt; 90 Days</text>
<text x="330.5" y="577.7" font-size="11" fill="#333" text-anchor="end" font-weight="400" >$119347.08</text>
<text x="365.5" y="394" font-size="16.2" fill="#333" text-anchor="start" font-weight="400" >Invoices</text>
<rect x="401.4" y="566.1999999999999" width="199.10000000000002" height="1.2" fill="#dcdcdc" />
<text x="393.8" y="570.3" font-size="10.2" fill="#666" text-anchor="end" font-weight="400" letter-spacing="-0.4">0</text>
<rect x="401.4" y="535.4999999999999" width="199.10000000000002" height="1.2" fill="#dcdcdc" />
<text x="393.8" y="539.5999999999999" font-size="10.2" fill="#666" text-anchor="end" font-weight="400" letter-spacing="-0.4">10000</text>
<rect x="401.4" y="504.79999999999995" width="199.10000000000002" height="1.2" fill="#dcdcdc" />
<text x="393.8" y="508.9" font-size="10.2" fill="#666" text-anchor="end" font-weight="400" letter-spacing="-0.4">20000</text>
<rect x="401.4" y="474.0999999999999" width="199.10000000000002" height="1.2" fill="#dcdcdc" />
<text x="393.8" y="478.19999999999993" font-size="10.2" fill="#666" text-anchor="end" font-weight="400" letter-spacing="-0.4">30000</text>
<rect x="401.4" y="443.3999999999999" width="199.10000000000002" height="1.2" fill="#dcdcdc" />
<text x="393.8" y="447.49999999999994" font-size="10.2" fill="#666" text-anchor="end" font-weight="400" letter-spacing="-0.4">40000</text>
<rect x="401.4" y="412.69999999999993" width="199.10000000000002" height="1.2" fill="#dcdcdc" />
<text x="393.8" y="416.79999999999995" font-size="10.2" fill="#666" text-anchor="end" font-weight="400" letter-spacing="-0.4">50000</text>
<rect x="414.9" y="413.1" width="1" height="153.69999999999993" fill="#c6c6c6" />
<text x="415.4" y="582" font-size="10.5" fill="#666" text-anchor="middle" font-weight="400" >Feb</text>
<rect x="401.4" y="490.04999999999995" width="28" height="76.75" fill="rgba(200,120,225,0.3)" />
<path d="M402.4 566.8 V490.04999999999995 H428.4 V566.8" fill="none" stroke="#bf6fe0" stroke-width="2" />
<rect x="402.4" y="440.395" width="26" height="49.65499999999997" fill="rgba(190,90,50,0.35)" stroke="#c2532b" stroke-width="2"/>
<rect x="449.2" y="413.1" width="1" height="153.69999999999993" fill="#c6c6c6" />
<text x="449.7" y="582" font-size="10.5" fill="#666" text-anchor="middle" font-weight="400" >Mar</text>
<rect x="435.7" y="565.5999999999999" width="28" height="2.4" fill="#c2532b" />
<rect x="483.5" y="413.1" width="1" height="153.69999999999993" fill="#c6c6c6" />
<text x="484.0" y="582" font-size="10.5" fill="#666" text-anchor="middle" font-weight="400" >Apr</text>
<rect x="470.0" y="565.5999999999999" width="28" height="2.4" fill="#c2532b" />
<rect x="517.8" y="413.1" width="1" height="153.69999999999993" fill="#c6c6c6" />
<text x="518.3" y="582" font-size="10.5" fill="#666" text-anchor="middle" font-weight="400" >May</text>
<rect x="504.29999999999995" y="565.5999999999999" width="28" height="2.4" fill="#c2532b" />
<rect x="552.0999999999999" y="413.1" width="1" height="153.69999999999993" fill="#c6c6c6" />
<text x="552.5999999999999" y="582" font-size="10.5" fill="#666" text-anchor="middle" font-weight="400" >Jun</text>
<rect x="538.5999999999999" y="565.5999999999999" width="28" height="2.4" fill="#c2532b" />
<rect x="586.4" y="413.1" width="1" height="153.69999999999993" fill="#c6c6c6" />
<text x="586.9" y="582" font-size="10.5" fill="#666" text-anchor="middle" font-weight="400" >Jul</text>
<rect x="572.9" y="565.5999999999999" width="28" height="2.4" fill="#c2532b" />
<text x="646.5" y="394.5" font-size="16.2" fill="#333" text-anchor="start" font-weight="400" >Task status</text>
<rect x="744.5" y="380.5" width="138" height="30" fill="#fff" stroke="#c8c8c8" stroke-width="1"/>
<text x="752" y="399.5" font-size="11" fill="#777" text-anchor="start" font-weight="400" >Black city</text>
<path d="M863 394.5 H872 L867.5 399 Z" fill="#1c6fc2" stroke="none" stroke-width="1" />
<path d="M734.7 500.3 L645.70 500.30 A89 89 0 1 1 821.11 521.60 Z" fill="#22b11f" stroke="#fff" stroke-width="1.3" stroke-linejoin="round"/>
<path d="M734.7 500.3 L821.11 521.60 A89 89 0 0 1 766.26 583.52 Z" fill="#3090f7" stroke="#fff" stroke-width="1.3" stroke-linejoin="round"/>
<path d="M734.7 500.3 L766.26 583.52 A89 89 0 0 1 723.97 588.65 Z" fill="#fe6c05" stroke="#fff" stroke-width="1.3" stroke-linejoin="round"/>
<path d="M734.7 500.3 L723.97 588.65 A89 89 0 0 1 684.14 573.55 Z" fill="#485a0b" stroke="#fff" stroke-width="1.3" stroke-linejoin="round"/>
<path d="M734.7 500.3 L684.14 573.55 A89 89 0 0 1 655.89 541.66 Z" fill="#f5ea06" stroke="#fff" stroke-width="1.3" stroke-linejoin="round"/>
<path d="M734.7 500.3 L655.89 541.66 A89 89 0 0 1 645.70 500.30 Z" fill="#c9c9c9" stroke="#fff" stroke-width="1.3" stroke-linejoin="round"/>
<text x="742.9" y="439.5" font-size="10.2" fill="#fff" text-anchor="middle" font-weight="400" >54%</text>
<text x="784.7" y="550.5" font-size="10.2" fill="#fff" text-anchor="middle" font-weight="400" >15%</text>
<text x="742" y="572" font-size="10.2" fill="#fff" text-anchor="middle" font-weight="400" >8%</text>
<text x="709.7" y="568" font-size="10.2" fill="#fff" text-anchor="middle" font-weight="400" >8%</text>
<text x="684.3" y="550.5" font-size="10.2" fill="#fff" text-anchor="middle" font-weight="400" >8%</text>
<text x="669" y="521.4" font-size="10.2" fill="#fff" text-anchor="middle" font-weight="400" >8%</text>
<rect x="808" y="415" width="72" height="81" fill="rgba(255,255,255,0.8)" />
<rect x="810.2" y="417.8" width="8.7" height="8.5" fill="#22b11f" />
<text x="821" y="426.2" font-size="10.2" fill="#555" text-anchor="start" font-weight="400" >Open</text>
<rect x="810.2" y="431.18" width="8.7" height="8.5" fill="#3090f7" />
<text x="821" y="439.58" font-size="10.2" fill="#555" text-anchor="start" font-weight="400" >In progress</text>
<rect x="810.2" y="444.56" width="8.7" height="8.5" fill="#fe6c05" />
<text x="821" y="452.96" font-size="10.2" fill="#555" text-anchor="start" font-weight="400" >Need Details</text>
<rect x="810.2" y="457.94" width="8.7" height="8.5" fill="#485a0b" />
<text x="821" y="466.34" font-size="10.2" fill="#555" text-anchor="start" font-weight="400" >Reassigned</text>
<rect x="810.2" y="471.32" width="8.7" height="8.5" fill="#f5ea06" />
<text x="821" y="479.71999999999997" font-size="10.2" fill="#555" text-anchor="start" font-weight="400" >Review</text>
<rect x="810.2" y="484.70000000000005" width="8.7" height="8.5" fill="#c9c9c9" />
<text x="821" y="493.1" font-size="10.2" fill="#555" text-anchor="start" font-weight="400" >Hold</text>
<text x="911" y="394.4" font-size="16.2" fill="#333" text-anchor="start" font-weight="400" >Task types</text>
<rect x="1009.5" y="381.0" width="138" height="29" fill="#fff" stroke="#c8c8c8" stroke-width="1"/>
<text x="1017" y="400.0" font-size="11" fill="#777" text-anchor="start" font-weight="400" >Black city</text>
<path d="M1128 395.0 H1137 L1132.5 399.5 Z" fill="#1c6fc2" stroke="none" stroke-width="1" />
<path d="M999 500.7 L910.00 500.70 A89 89 0 1 1 999.00 589.70 Z" fill="#fa835c" stroke="#fff" stroke-width="1.3" stroke-linejoin="round"/>
<path d="M999 500.7 L999.00 589.70 A89 89 0 0 1 930.82 557.91 Z" fill="#50d38f" stroke="#fff" stroke-width="1.3" stroke-linejoin="round"/>
<path d="M999 500.7 L930.82 557.91 A89 89 0 0 1 915.37 531.14 Z" fill="#4f9bcf" stroke="#fff" stroke-width="1.3" stroke-linejoin="round"/>
<path d="M999 500.7 L915.37 531.14 A89 89 0 0 1 910.00 500.70 Z" fill="#c78de0" stroke="#fff" stroke-width="1.3" stroke-linejoin="round"/>
<text x="971.5" y="566.6" font-size="10.5" fill="#fff" text-anchor="middle" font-weight="700" >14%</text>
<text x="940.6" y="539.6" font-size="10.5" fill="#fff" text-anchor="middle" font-weight="700" >6%</text>
<text x="932.5" y="516.9" font-size="10.5" fill="#fff" text-anchor="middle" font-weight="700" >6%</text>
<rect x="1035" y="417" width="110" height="52.5" fill="rgba(255,255,255,0.8)" />
<rect x="1037.3" y="418.7" width="8.5" height="8.3" fill="#fa835c" />
<text x="1048" y="427.0" font-size="10.2" fill="#555" text-anchor="start" font-weight="400" >Project Management</text>
<rect x="1037.3" y="432.0" width="8.5" height="8.3" fill="#50d38f" />
<text x="1048" y="440.3" font-size="10.2" fill="#555" text-anchor="start" font-weight="400" >Support</text>
<rect x="1037.3" y="445.3" width="8.5" height="8.3" fill="#4f9bcf" />
<text x="1048" y="453.6" font-size="10.2" fill="#555" text-anchor="start" font-weight="400" >QA</text>
<rect x="1037.3" y="458.6" width="8.5" height="8.3" fill="#c78de0" />
<text x="1048" y="466.90000000000003" font-size="10.2" fill="#555" text-anchor="start" font-weight="400" >Development</text>
<text x="1045.6" y="458.4" font-size="10.5" fill="#fff" text-anchor="middle" font-weight="700" opacity="0.85">75%</text>
</svg>
</body></html>
